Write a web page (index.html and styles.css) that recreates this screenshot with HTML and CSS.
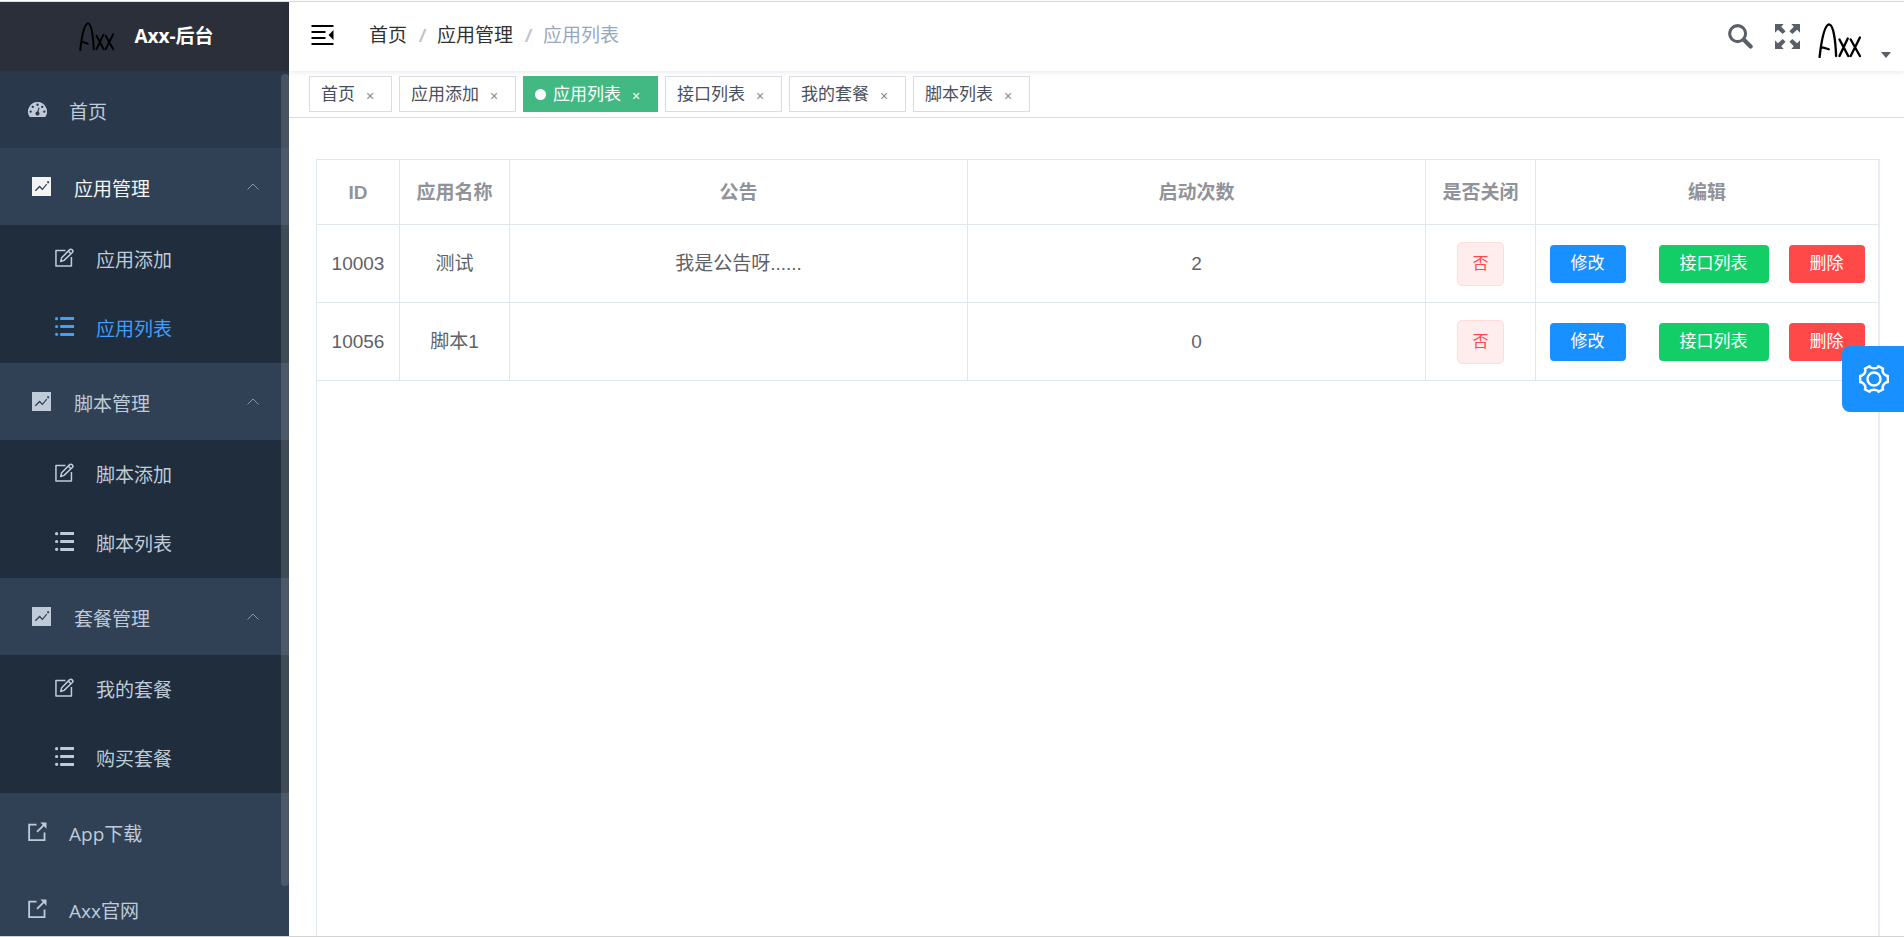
FILE: index.html
```html
<!DOCTYPE html>
<html lang="zh-CN">
<head>
<meta charset="utf-8">
<title>Axx-后台</title>
<link rel="stylesheet" href="styles.css">
</head>
<body>
<svg class="sprite" aria-hidden="true">
  <symbol id="i-dash" viewBox="0 0 128 100"><path fill="currentColor" fill-rule="evenodd" d="M64 0a64 64 0 0 0-55 97q2 3 6 3h98q4 0 6-3A64 64 0 0 0 64 0zM64 10a8 8 0 1 1 0 16a8 8 0 1 1 0-16zM32 24a8 8 0 1 1 0 16a8 8 0 1 1 0-16zM96 24a8 8 0 1 1 0 16a8 8 0 1 1 0-16zM18 56a8 8 0 1 1 0 16a8 8 0 1 1 0-16zM110 56a8 8 0 1 1 0 16a8 8 0 1 1 0-16zM71 36l7 2l-7 27a14 14 0 1 1-8-2z"/></symbol>
  <symbol id="i-chart" viewBox="0 0 20 20"><path fill="currentColor" fill-rule="evenodd" d="M0 0h20v20H0zM3 14l1 1l4-4l3 3l5-6l-1-1l-4 5l-3-3zM16 4.500h2v2h-2z"/></symbol>
  <symbol id="i-edit" viewBox="0 0 20 20"><g fill="none" stroke="currentColor" stroke-width="1.600" stroke-linejoin="round"><path d="M11 2.700H1V19h16.300V9.500"/><path d="M6 14.300l1-4L15.200 2a2 2 0 0 1 3 0a2 2 0 0 1 0 2.800L9.500 13zM14 3.300l2.800 2.800"/></g></symbol>
  <symbol id="i-list" viewBox="0 0 20 20"><path fill="currentColor" d="M5.500 0H20v3.200H5.500zM5.500 8.400H20v3.200H5.500zM5.500 16.800H20V20H5.500z"/><circle cx="1.700" cy="1.800" r="1.700" fill="currentColor"/><circle cx="1.700" cy="10" r="1.700" fill="currentColor"/><circle cx="1.700" cy="18.200" r="1.700" fill="currentColor"/></symbol>
  <symbol id="i-link" viewBox="0 0 20 20"><path d="M9 2.800H1.200V19H17.400V11M9.500 10.500L18 2" fill="none" stroke="currentColor" stroke-width="1.900"/><path d="M13 .5h6.500V7z" fill="currentColor"/></symbol>
  <symbol id="i-up" viewBox="0 0 12 8"><path d="M.5 6.500L6 1l5.500 5.500" fill="none" stroke="currentColor"/></symbol>
  <symbol id="i-fold" viewBox="0 0 22 20"><path fill="currentColor" d="M0 0h22v2H0zM0 6h14v2H0zM0 12h14v2H0zM0 18h22v2H0zM22 5v10l-5-5z"/></symbol>
  <symbol id="i-search" viewBox="0 0 26 26"><circle cx="10" cy="10" r="8.300" fill="none" stroke="currentColor" stroke-width="3.200"/><path d="M16.500 16.500L23.500 23.500" stroke="currentColor" stroke-width="4.400" stroke-linecap="round"/></symbol>
  <symbol id="i-full" viewBox="0 0 26 26"><g fill="currentColor"><path d="M0 0h9L6.500 2.800L11 7.500L8 10.500L3 6L0 9z"/><path d="M26 0h-9L19.500 2.800L15 7.500L18 10.500L23 6L26 9z"/><path d="M0 26h9L6.500 23.200L11 18.500L8 15.500L3 20L0 17z"/><path d="M26 26h-9L19.500 23.200L15 18.500L18 15.500L23 20L26 17z"/></g></symbol>
  <symbol id="i-logo" viewBox="0 0 44 36"><path d="M1.500 35C3 22 6 3 11 1.500C16 1 18 20 18.500 34M3 24.500L11 27M22 17L31 34M30.500 16L22 34M33.500 17L43 34M43 15L33.500 34" fill="none" stroke="#000" stroke-width="2.400" stroke-linecap="round" stroke-linejoin="round"/></symbol>
  <symbol id="i-gear" viewBox="0 0 30 30"><g fill="none" stroke="currentColor" stroke-width="2.400"><circle cx="15" cy="15" r="6.500"/><path d="M11.500 3.500Q15 5 18.500 3.500L19.500 2.200L24 4.700L23.500 6.500Q24 10 27 11.500L28.800 12V18L27 18.500Q24 20 23.500 23.500L24 25.300L19.500 27.800L18.500 26.500Q15 25 11.500 26.500L10.500 27.800L6 25.300L6.500 23.500Q6 20 3 18.500L1.200 18V12L3 11.500Q6 10 6.500 6.500L6 4.700L10.500 2.200Z"/></g></symbol>
</svg>
<div class="app">
  <aside class="sidebar">
    <a class="brand" href="#"><svg class="brand-logo"><use href="#i-logo"/></svg><span>Axx-后台</span></a>
    <nav class="menu">
      <a class="item hover" href="#"><svg class="ico dash"><use href="#i-dash"/></svg>首页</a>
      <button class="item group open" type="button"><svg class="ico"><use href="#i-chart"/></svg>应用管理<svg class="chev"><use href="#i-up"/></svg></button>
      <div class="sub">
        <a href="#"><svg class="ico"><use href="#i-edit"/></svg>应用添加</a>
        <a class="current" href="#"><svg class="ico"><use href="#i-list"/></svg>应用列表</a>
      </div>
      <button class="item group" type="button"><svg class="ico"><use href="#i-chart"/></svg>脚本管理<svg class="chev"><use href="#i-up"/></svg></button>
      <div class="sub">
        <a href="#"><svg class="ico"><use href="#i-edit"/></svg>脚本添加</a>
        <a href="#"><svg class="ico"><use href="#i-list"/></svg>脚本列表</a>
      </div>
      <button class="item group" type="button"><svg class="ico"><use href="#i-chart"/></svg>套餐管理<svg class="chev"><use href="#i-up"/></svg></button>
      <div class="sub">
        <a href="#"><svg class="ico"><use href="#i-edit"/></svg>我的套餐</a>
        <a href="#"><svg class="ico"><use href="#i-list"/></svg>购买套餐</a>
      </div>
      <a class="item" href="#"><svg class="ico"><use href="#i-link"/></svg>App下载</a>
      <a class="item" href="#"><svg class="ico"><use href="#i-link"/></svg>Axx官网</a>
    </nav>
    <div class="thumb"></div>
  </aside>
  <main class="main">
    <header class="navbar">
      <button class="plain" type="button" aria-label="收起菜单"><svg class="fold"><use href="#i-fold"/></svg></button>
      <nav class="crumbs"><a href="#">首页</a><i>/</i><a href="#">应用管理</a><i>/</i><span>应用列表</span></nav>
      <div class="tools">
        <button class="plain" type="button" aria-label="搜索"><svg class="tool"><use href="#i-search"/></svg></button>
        <button class="plain" type="button" aria-label="全屏"><svg class="tool"><use href="#i-full"/></svg></button>
        <button class="plain user" type="button" aria-label="用户"><svg class="avatar"><use href="#i-logo"/></svg><span class="caret"></span></button>
      </div>
    </header>
    <div class="tabs">
      <a class="tab" href="#">首页<b>×</b></a>
      <a class="tab" href="#">应用添加<b>×</b></a>
      <a class="tab active" href="#">应用列表<b>×</b></a>
      <a class="tab" href="#">接口列表<b>×</b></a>
      <a class="tab" href="#">我的套餐<b>×</b></a>
      <a class="tab" href="#">脚本列表<b>×</b></a>
    </div>
    <section class="content">
      <div class="table-box">
        <table>
          <colgroup><col class="c-id"><col class="c-name"><col><col><col class="c-name"><col class="c-edit"></colgroup>
          <thead><tr><th>ID</th><th>应用名称</th><th>公告</th><th>启动次数</th><th>是否关闭</th><th>编辑</th></tr></thead>
          <tbody>
            <tr><td>10003</td><td>测试</td><td>我是公告呀......</td><td>2</td><td><span class="tag">否</span></td>
              <td><div class="ops"><button class="btn blue" type="button">修改</button><button class="btn green" type="button">接口列表</button><button class="btn red" type="button">删除</button></div></td></tr>
            <tr><td>10056</td><td>脚本1</td><td></td><td>0</td><td><span class="tag">否</span></td>
              <td><div class="ops"><button class="btn blue" type="button">修改</button><button class="btn green" type="button">接口列表</button><button class="btn red" type="button">删除</button></div></td></tr>
          </tbody>
        </table>
      </div>
    </section>
  </main>
</div>
<button class="settings" type="button" aria-label="设置"><svg><use href="#i-gear"/></svg></button>
</body>
</html>
```
FILE: styles.css
```css
* { box-sizing: border-box; }
body {
  margin: 0;
  font: 19px/28px "Liberation Sans", "Noto Sans CJK SC", sans-serif;
  color: #606266;
  background: #fff;
}
a { color: inherit; text-decoration: none; }
button { font: inherit; color: inherit; border: 0; padding: 0; background: none; cursor: pointer; }
svg { display: block; flex: none; }
.sprite { position: absolute; width: 0; height: 0; }

.app {
  display: flex;
  height: 100vh;
  padding-top: 1px;
  border-bottom: 1px solid #d3d3d3;
  overflow: hidden;
}
.sidebar {
  position: relative;
  flex: none;
  display: flex;
  flex-direction: column;
  width: 289px;
  border-top: 1px solid #dcdfe6;
  background: #304156;
  font-family: "Open Sans", "Noto Sans CJK SC", sans-serif;
  color: #bfcbd9;
  overflow: hidden;
}
.brand {
  flex: none;
  display: flex;
  align-items: center;
  justify-content: center;
  gap: 20px;
  height: 69px;
  padding: 0 0 2px 4px;
  background: #2b2f3a;
  color: #fff;
  font-weight: 700;
}
.brand-logo { width: 35px; height: 29px; margin-top: 2px; }
.menu { flex: none; }
.item {
  display: flex;
  align-items: center;
  width: 100%;
  height: 77px;
  padding: 4px 30px 0 28px;
  text-align: left;
}
.item.hover { background: #2a384b; }
.group { padding-left: 32px; }
.open { color: #f4f4f5; }
.ico { width: 19px; height: 19px; margin: 0 22px 4px 0; }
.group .ico { margin-right: 23px; }
.chev { width: 12px; height: 8px; margin: 0 0 4px auto; color: #909399; }
.sub { background: #1f2d3d; }
.sub a { display: flex; align-items: center; height: 69px; padding-left: 55px; }
.sub .current { color: #409eff; }
.thumb {
  position: absolute;
  top: 72px;
  right: 0;
  bottom: 50px;
  width: 8px;
  border-radius: 4px;
  background: rgba(144, 147, 153, 0.3);
}

.main { flex: 1; min-width: 0; display: flex; flex-direction: column; border-top: 1px solid #dcdfe6; }
.navbar {
  position: relative;
  flex: none;
  display: flex;
  align-items: center;
  height: 69px;
  padding: 0 13px 3px 22px;
  box-shadow: 0 1px 5px rgba(0, 21, 41, 0.1);
}
.fold { width: 23px; height: 20px; color: #000; }
.crumbs { display: flex; margin-left: 35px; padding-top: 1px; color: #303133; }
.crumbs i { width: 30px; text-align: center; font-weight: 700; color: #c0c4cc; }
.crumbs span { color: #97a8be; }
.tools { display: flex; align-items: center; gap: 22px; margin-left: auto; padding-top: 2px; color: #5a5e66; }
.tool { width: 25px; height: 25px; }
.user { display: flex; align-items: flex-end; gap: 20px; margin: 8px 0 0 -4px; }
.avatar { width: 43px; height: 35px; }
.caret { border: 5px solid transparent; border-top: 6px solid #5a5e66; border-bottom: 0; }

.tabs {
  flex: none;
  display: flex;
  gap: 7px;
  height: 47px;
  padding: 5px 20px;
  border-bottom: 1px solid #d8dce5;
}
.tab {
  display: flex;
  align-items: center;
  height: 36px;
  padding: 1px 15px 0 11px;
  border: 1px solid #d8dce5;
  font-size: 17px;
  color: #495060;
}
.tab b { width: 12px; margin: 3px 0 0 9px; text-align: center; font-size: 14px; font-weight: 400; color: #888; }
.tab.active { border-color: #42b983; background: #42b983; color: #fff; }
.tab.active b { color: #fff; }
.tab.active::before { width: 11px; height: 11px; margin-right: 7px; border-radius: 50%; background: #fff; content: ""; }

.content { flex: 1; display: flex; padding: 41px 24px 0 27px; }
.table-box { flex: 1; border: 1px solid #dfe6ec; border-right: 2px solid #e6ebf5; border-bottom: 0; }
table { width: 100%; table-layout: fixed; border-collapse: separate; border-spacing: 0; text-align: center; }
.c-id { width: 83px; }
.c-name { width: 110px; }
.c-edit { width: 342px; }
th, td { padding: 1px 0 0; border-right: 1px solid #dfe6ec; border-bottom: 1px solid #dfe6ec; }
th:last-child, td:last-child { border-right: 0; }
th { height: 65px; font-weight: 700; color: #909399; }
td { height: 78px; }
.tag {
  display: inline-block;
  padding: 0 14px;
  border: 1px solid #ffdbdb;
  border-radius: 5px;
  background: #ffeded;
  color: #ff4949;
  font-size: 16px;
  line-height: 42px;
  vertical-align: middle;
}
.ops { display: flex; justify-content: center; }
.btn { height: 38px; padding: 0 21px; border-radius: 4px; font-size: 17px; color: #fff; }
.blue { margin-right: 33px; background: #1890ff; }
.green { margin-right: 20px; background: #13ce66; }
.red { background: #ff4949; }

.settings {
  position: fixed;
  top: 346px;
  right: 0;
  width: 62px;
  height: 66px;
  padding-left: 17px;
  border-radius: 8px 0 0 8px;
  background: #1890ff;
  color: #fff;
}
.settings svg { width: 30px; height: 30px; }
```
